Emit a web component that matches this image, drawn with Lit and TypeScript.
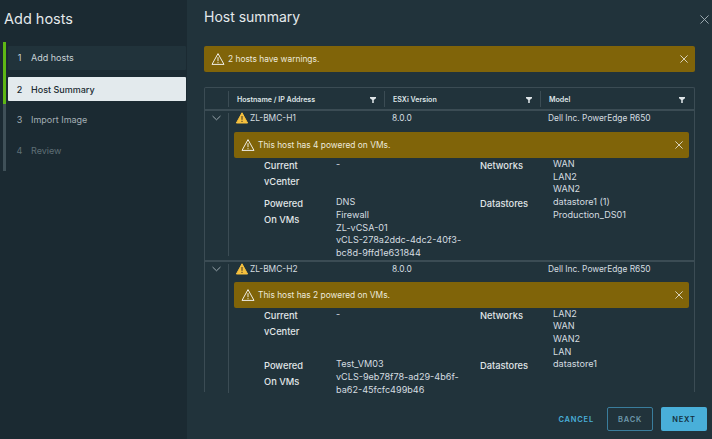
import { LitElement, html, css, svg } from "lit";
import { customElement } from "lit/decorators.js";

const warnOutline = html`<svg class="warn" viewBox="0 0 14 14" width="14" height="14" fill="none" stroke="#f0efe8" stroke-width="1">
  <path d="M7 1.6 L13 12.4 H1 Z" stroke-linejoin="round" />
  <path d="M7 5.2 V9.2 M7 10.2 V11.2" />
</svg>`;
const warnFilled = html`<svg class="warn-solid" viewBox="0 0 12 12" width="12" height="12">
  <path d="M6 .8 L11.6 11 H.4 Z" fill="#f6c13f" stroke="#f6c13f" stroke-linejoin="round" />
  <path d="M6 4 V7.8 M6 8.8 V10" stroke="#3a3320" stroke-width="1" />
</svg>`;
const closeIcon = (size: number, color = "#f0efe8") => html`<svg viewBox="0 0 10 10" width=${size} height=${size} fill="none" stroke=${color} stroke-width="1">
  ${svg`<path d="M.5 .5 L9.5 9.5 M9.5 .5 L.5 9.5" />`}
</svg>`;
const chevron = html`<svg viewBox="0 0 10 6" width="9" height="6" fill="none" stroke="#a9b6bc" stroke-width="1">
  <path d="M.6 .8 L5 5 L9.4 .8" />
</svg>`;
const filterIcon = html`<svg class="filter" viewBox="0 0 7 7" width="6" height="6" fill="#dfe5e8">
  <path d="M0 0 H7 V1.4 L4.4 3.4 V7 H2.6 V3.4 L0 1.4 Z" />
</svg>`;

type Host = {
  name: string;
  version: string;
  model: string;
  message: string;
  vcenter: string;
  networks: string[];
  vms: string[];
  datastores: string[];
};

const HOSTS: Host[] = [
  {
    name: "ZL-BMC-H1",
    version: "8.0.0",
    model: "Dell Inc. PowerEdge R650",
    message: "This host has 4 powered on VMs.",
    vcenter: "-",
    networks: ["WAN", "LAN2", "WAN2"],
    vms: ["DNS", "Firewall", "ZL-vCSA-01", "vCLS-278a2ddc-4dc2-40f3-bc8d-9ffd1e631844"],
    datastores: ["datastore1 (1)", "Production_DS01"],
  },
  {
    name: "ZL-BMC-H2",
    version: "8.0.0",
    model: "Dell Inc. PowerEdge R650",
    message: "This host has 2 powered on VMs.",
    vcenter: "-",
    networks: ["LAN2", "WAN", "WAN2", "LAN"],
    vms: ["Test_VM03", "vCLS-9eb78f78-ad29-4b6f-ba62-45fcfc499b46"],
    datastores: ["datastore1"],
  },
];

@customElement("app-root")
export class AppRoot extends LitElement {
  static styles = css`
    :host {
      display: flex;
      width: 712px;
      height: 439px;
      overflow: hidden;
      background: #21333b;
      color: #dfe5e8;
      font-family: Inter, "Liberation Sans", sans-serif;
    }
    .side {
      width: 187px;
      flex: none;
      background: #1b2a32;
      box-sizing: border-box;
      padding: 10px 0 0 3px;
    }
    .side h1 {
      margin: 0 0 13px 1px;
      font-size: 14.5px;
      line-height: 18px;
      padding-bottom: 1px;
      font-weight: 400;
      color: #e4e9eb;
    }
    .steps {
      border-left: 3px solid #3f5058;
      position: relative;
      height: 125px;
      padding: 4px 0 0 2px;
      display: flex;
      flex-direction: column;
    }
    .steps::before {
      content: "";
      position: absolute;
      left: -3px;
      top: 0;
      width: 3px;
      height: 62px;
      background: #5eb715;
    }
    .step {
      height: 24px;
      width: 178px;
      display: flex;
      align-items: center;
      box-sizing: border-box;
      padding-bottom: 1px;
      font-size: 9px;
      border-radius: 1px;
      margin-bottom: 7px;
    }
    .num {
      width: 23px;
      text-align: center;
    }
    .step.done {
      background: #21333b;
      color: #c9d2d6;
    }
    .step.active {
      background: #e3eaed;
      color: #1b2a32;
      font-weight: 500;
      padding-bottom: 0;
    }
    .step.todo {
      color: #a3afb5;
    }
    .step.off {
      color: #5f6f76;
    }
    .main {
      flex: 1;
      min-width: 0;
      display: flex;
      flex-direction: column;
      position: relative;
      padding: 7px 17px 0;
    }
    .main h2 {
      margin: 0 0 19px;
      font-size: 14px;
      line-height: 20px;
      font-weight: 400;
      color: #e4e9eb;
    }
    .dismiss {
      position: absolute;
      top: 15px;
      right: 3px;
      display: flex;
    }
    .alert {
      height: 26px;
      flex: none;
      box-sizing: border-box;
      display: flex;
      align-items: center;
      background: #806409;
      border-radius: 2px;
      padding: 0 7px;
      font-size: 8.4px;
      color: #ece9dc;
    }
    .alert span {
      flex: 1;
      margin-left: 3px;
    }
    .alert svg {
      flex: none;
    }
    .alert.page {
      width: 491px;
      margin-bottom: 15px;
    }
    .table {
      width: 491px;
      height: 305px;
      box-sizing: border-box;
      border: 1px solid #3b4c54;
      border-bottom: 0;
      border-radius: 2px 2px 0 0;
    }
    .cols {
      display: grid;
      grid-template-columns: 24px 156px 156px 1fr;
    }
    .head {
      height: 23px;
      box-sizing: border-box;
      align-items: center;
      border-bottom: 2px solid #3b4c54;
      font-size: 7.1px;
      font-weight: 600;
      color: #dfe5e8;
    }
    .head > div {
      height: 16px;
      display: flex;
      align-items: center;
      justify-content: space-between;
      box-sizing: border-box;
      border-right: 1px solid #3b4c54;
      padding: 1px 8px 0;
    }
    .head > div:last-child {
      border-right: 0;
      padding-right: 9px;
    }
    .filter {
      margin-top: 2px;
    }
    .row {
      display: grid;
      grid-template-columns: 24px 1fr;
      border-bottom: 2px solid #3b4c54;
    }
    .row:last-child {
      border-bottom: 0;
    }
    .expander {
      margin-top: 2px;
      margin-bottom: 4px;
      border-right: 1px solid #3b4c54;
      display: flex;
      justify-content: center;
      padding-top: 2px;
      box-sizing: border-box;
    }
    .summary {
      display: grid;
      grid-template-columns: 155px 156px 1fr;
      height: 21px;
      font-size: 8.4px;
      line-height: 14px;
      color: #d5dde0;
    }
    .row + .row .summary {
      height: 20px;
    }
    .summary > div {
      padding-left: 8px;
    }
    .summary > .name {
      display: flex;
      align-items: flex-start;
      gap: 2px;
      padding-left: 7px;
    }
    .summary .warn-solid {
      margin-top: 1px;
    }
    .row .alert {
      margin: 0 5px;
      padding-right: 6px;
    }
    .details {
      display: grid;
      grid-template-columns: 72px 144px 73px 1fr;
      margin: 0 0 0 35px;
      font-size: 9.3px;
    }
    .details dt {
      line-height: 16px;
      font-weight: 500;
      color: #e0e6e8;
      width: 50px;
    }
    .details dd {
      margin: 0;
      padding-right: 17px;
      line-height: 12.7px;
      color: #d5dde0;
      font-size: 9.1px;
    }
    .details dd div {
      overflow-wrap: anywhere;
    }
    .foot {
      display: flex;
      justify-content: flex-end;
      align-items: center;
      position: absolute;
      right: 5px;
      bottom: 8px;
      gap: 8px;
    }
    .btn {
      box-sizing: border-box;
      width: 46px;
      height: 24px;
      display: flex;
      align-items: center;
      justify-content: center;
      border-radius: 2px;
      font-size: 7.5px;
      font-weight: 600;
      letter-spacing: 0.8px;
    }
    .btn.link {
      width: auto;
      color: #49afd9;
      margin-right: 5px;
    }
    .btn.outline {
      border: 1px solid #3a7d9c;
      color: #6d97aa;
    }
    .btn.primary {
      background: #49afd9;
      color: #14303d;
    }
  `;

  private renderHost(h: Host) {
    return html`<div class="row">
      <div class="expander">${chevron}</div>
      <div>
        <div class="summary">
          <div class="name">${warnFilled}<span>${h.name}</span></div>
          <div>${h.version}</div>
          <div>${h.model}</div>
        </div>
        <div class="alert">${warnOutline}<span>${h.message}</span>${closeIcon(8)}</div>
        <dl class="details">
          <dt>Current vCenter</dt>
          <dd>${h.vcenter}</dd>
          <dt>Networks</dt>
          <dd>${h.networks.map((n) => html`<div>${n}</div>`)}</dd>
          <dt>Powered On VMs</dt>
          <dd>${h.vms.map((n) => html`<div>${n}</div>`)}</dd>
          <dt>Datastores</dt>
          <dd>${h.datastores.map((n) => html`<div>${n}</div>`)}</dd>
        </dl>
      </div>
    </div>`;
  }

  render() {
    return html`
      <aside class="side">
        <h1>Add hosts</h1>
        <div class="steps">
          <div class="step done"><span class="num">1</span><span>Add hosts</span></div>
          <div class="step active"><span class="num">2</span><span>Host Summary</span></div>
          <div class="step todo"><span class="num">3</span><span>Import Image</span></div>
          <div class="step off"><span class="num">4</span><span>Review</span></div>
        </div>
      </aside>
      <main class="main">
        <h2>Host summary</h2>
        <div class="dismiss">${closeIcon(9, "#a9b6bc")}</div>
        <div class="alert page">${warnOutline}<span>2 hosts have warnings.</span>${closeIcon(8)}</div>
        <div class="table">
          <div class="cols head">
            <div></div>
            <div>Hostname / IP Address ${filterIcon}</div>
            <div>ESXi Version ${filterIcon}</div>
            <div>Model ${filterIcon}</div>
          </div>
          ${HOSTS.map((h) => this.renderHost(h))}
        </div>
        <div class="foot">
          <div class="btn link">CANCEL</div>
          <div class="btn outline">BACK</div>
          <div class="btn primary">NEXT</div>
        </div>
      </main>
    `;
  }
}
